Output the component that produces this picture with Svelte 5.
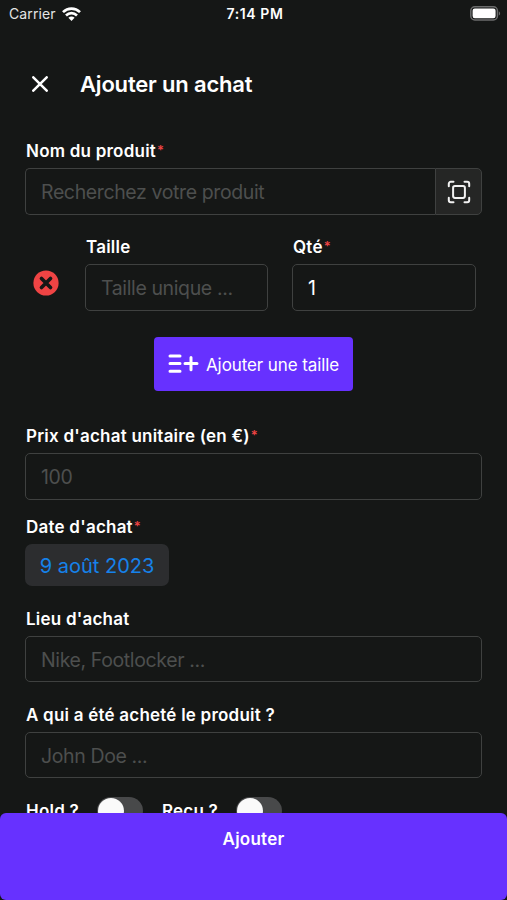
<script>
  let product = $state('')
  let size = $state('')
  let quantity = $state('1')
  let price = $state('')
  let place = $state('')
  let seller = $state('')
  let hold = $state(false)
  let received = $state(false)
</script>

<div class="screen">
  <div class="status-bar">
    <div class="carrier">
      <span>Carrier</span>
      <svg width="19" height="14" viewBox="0 0 19 14" fill="none" stroke="#fff" stroke-width="2.7">
        <path d="M1 5.1C5.8 0.4 13.2 0.4 18 5.1" />
        <path d="M4 8.4C7.2 5.4 11.8 5.4 15 8.4" />
        <path d="M6.4 10.8C8.2 9.2 10.8 9.2 12.6 10.8L9.5 13.9Z" fill="#fff" stroke="none" />
      </svg>
    </div>
    <span class="time">7:14 PM</span>
    <svg class="battery" width="31" height="15" viewBox="0 0 31 15">
      <rect x="0.8" y="0.8" width="26.6" height="13.2" rx="4" fill="none" stroke="#6b6c6c" stroke-width="1.5" />
      <rect x="2.6" y="2.6" width="23" height="9.6" rx="2.2" fill="#fff" />
      <path d="M28.8 5.2C30.6 5.9 30.6 8.9 28.8 9.6Z" fill="#6b6c6c" />
    </svg>
  </div>

  <header>
    <button class="close" aria-label="Fermer">
      <svg width="16" height="16" viewBox="0 0 16 16" stroke="#fff" stroke-width="2.5" stroke-linecap="round">
        <path d="M1.3 1.3L14.7 14.7M14.7 1.3L1.3 14.7" />
      </svg>
    </button>
    <h1>Ajouter un achat</h1>
  </header>

  <form>
    <div class="field">
      <label for="product">Nom du produit<i>*</i></label>
      <div class="search">
        <input id="product" placeholder="Recherchez votre produit" bind:value={product} />
        <button type="button" class="scan" aria-label="Scanner">
          <svg width="24" height="24" viewBox="0 0 24 24" fill="none" stroke="#f2f2f2" stroke-width="2" stroke-linecap="round" stroke-linejoin="round">
            <path d="M1.8 6.3V3.8a2 2 0 0 1 2-2h2.7M17.5 1.8h2.7a2 2 0 0 1 2 2v2.5M22.2 17.7v2.5a2 2 0 0 1-2 2h-2.7M6.5 22.2H3.8a2 2 0 0 1-2-2v-2.5" />
            <rect x="6.1" y="6.1" width="11.8" height="11.8" rx="1.8" />
          </svg>
        </button>
      </div>
    </div>

    <div class="size-row">
      <button type="button" class="remove" aria-label="Supprimer">
        <svg width="26" height="26" viewBox="0 0 26 26">
          <circle cx="13" cy="13" r="12.6" fill="#ef4444" />
          <path d="M8.5 8.5L17.5 17.5M17.5 8.5L8.5 17.5" stroke="#151716" stroke-width="3.7" stroke-linecap="round" />
        </svg>
      </button>
      <div class="field">
        <label for="size">Taille</label>
        <input id="size" placeholder="Taille unique ..." bind:value={size} />
      </div>
      <div class="field">
        <label for="quantity">Qté<i>*</i></label>
        <input id="quantity" bind:value={quantity} />
      </div>
    </div>

    <button type="button" class="add-size">
      <svg width="31" height="20" viewBox="0 0 31 20" stroke="#fff" stroke-width="3" stroke-linecap="round">
        <path d="M2 2H12M2 9.6H12M2 17.2H12M17 9.6H29M23 3.4V15.8" />
      </svg>
      <span>Ajouter une taille</span>
    </button>

    <div class="field price">
      <label for="price">Prix d'achat unitaire (en €)<i>*</i></label>
      <input id="price" placeholder="100" bind:value={price} />
    </div>

    <div class="field date">
      <span class="label">Date d'achat<i>*</i></span>
      <button type="button" class="date-value">9 août 2023</button>
    </div>

    <div class="field short">
      <label for="place">Lieu d'achat</label>
      <input id="place" placeholder="Nike, Footlocker ..." bind:value={place} />
    </div>

    <div class="field short">
      <label for="seller">A qui a été acheté le produit ?</label>
      <input id="seller" placeholder="John Doe ..." bind:value={seller} />
    </div>

    <div class="switches">
      <span class="label">Hold ?</span>
      <button type="button" class="switch" class:on={hold} aria-label="Hold" onclick={() => (hold = !hold)}></button>
      <span class="label">Reçu ?</span>
      <button type="button" class="switch" class:on={received} aria-label="Reçu" onclick={() => (received = !received)}></button>
    </div>
  </form>

  <button class="submit">Ajouter</button>
</div>

<style>
  :global(body) {
    background: #151716;
  }

  .screen {
    position: relative;
    display: flex;
    flex-direction: column;
    height: 900px;
    overflow: hidden;
    background: #151716;
    color: #fff;
    font-family: Inter, "Liberation Sans", sans-serif;
  }

  button {
    padding: 0;
    border: 0;
    background: none;
    color: inherit;
    font-family: inherit;
    cursor: pointer;
  }

  svg {
    display: block;
    flex: none;
  }

  .status-bar {
    display: grid;
    grid-template-columns: 1fr auto 1fr;
    align-items: center;
    height: 27px;
    padding: 0 6px 0 9px;
    font-size: 14px;
  }

  .carrier {
    display: flex;
    align-items: center;
    gap: 6px;
    color: #e4e4e4;
    letter-spacing: 0.1px;
  }

  .time {
    font-weight: 600;
    letter-spacing: 0.6px;
  }

  .battery {
    justify-self: end;
  }

  header {
    display: flex;
    align-items: center;
    gap: 32px;
    height: 40px;
    margin-top: 37px;
    padding-left: 32px;
  }

  h1 {
    margin: 0;
    font-size: 22px;
    font-weight: 600;
    letter-spacing: -0.18px;
  }

  form {
    display: flex;
    flex-direction: column;
    padding: 36px 25px 0;
  }

  .field {
    display: flex;
    flex-direction: column;
    gap: 6px;
  }

  label,
  .label {
    padding-left: 1px;
    font-size: 17px;
    font-weight: 600;
    letter-spacing: 0.22px;
    line-height: 22px;
    white-space: nowrap;
  }

  i {
    margin-left: 1px;
    color: #ef4444;
    font-size: 13px;
    font-style: normal;
    line-height: 1;
    vertical-align: 2px;
  }

  input {
    box-sizing: border-box;
    width: 100%;
    height: 47px;
    padding: 0 15px;
    border: 1px solid #3f4140;
    border-radius: 5px;
    outline: none;
    background: transparent;
    color: #fff;
    font-family: inherit;
    font-size: 19.5px;
    letter-spacing: -0.38px;
  }

  input::placeholder {
    color: #4d4f4e;
    opacity: 1;
  }

  .search {
    display: flex;
  }

  .search input {
    flex: 1;
    min-width: 0;
    border-right: 0;
    border-radius: 5px 0 0 5px;
  }

  .scan {
    display: flex;
    align-items: center;
    justify-content: center;
    box-sizing: border-box;
    width: 47px;
    height: 47px;
    border: 1px solid #3f4140;
    border-radius: 0 5px 5px 0;
    background: #252625;
  }

  .size-row {
    display: grid;
    grid-template-columns: 28px 183px 184px;
    column-gap: 24px;
    margin: 21px 0 0 8px;
  }

  .remove {
    align-self: end;
    margin-bottom: 15px;
  }

  .add-size {
    display: flex;
    align-items: center;
    align-self: center;
    justify-content: center;
    gap: 7px;
    width: 199px;
    height: 54px;
    margin-top: 26px;
    border-radius: 4px;
    background: #6731ff;
    font-size: 17px;
    letter-spacing: -0.1px;
  }

  .add-size span {
    padding-top: 1px;
  }

  .price {
    margin-top: 34px;
  }

  .date {
    align-items: flex-start;
    margin-top: 16px;
  }

  .date-value {
    width: 144px;
    height: 42px;
    padding-top: 1px;
    border-radius: 7px;
    background: #2c2d2f;
    color: #1682ea;
    font-size: 20px;
  }

  .short {
    margin-top: 22px;
  }

  .short input {
    height: 46px;
    padding-top: 1px;
  }

  .switches {
    display: flex;
    align-items: center;
    gap: 18px;
    margin-top: 19px;
  }

  .switch {
    width: 46px;
    height: 28px;
    padding: 1px;
    border-radius: 14px;
    background: #48494a;
  }

  .switch::before {
    content: '';
    display: block;
    width: 26px;
    height: 26px;
    border-radius: 50%;
    background: #fafafa;
  }

  .switch.on {
    background: #6731ff;
  }

  .switch.on::before {
    margin-left: auto;
  }

  .submit {
    position: absolute;
    right: 0;
    bottom: 0;
    left: 0;
    display: flex;
    justify-content: center;
    height: 87px;
    padding-top: 16px;
    border-radius: 6px;
    background: #6731ff;
    font-size: 17px;
    font-weight: 600;
    letter-spacing: 0.25px;
  }
</style>
